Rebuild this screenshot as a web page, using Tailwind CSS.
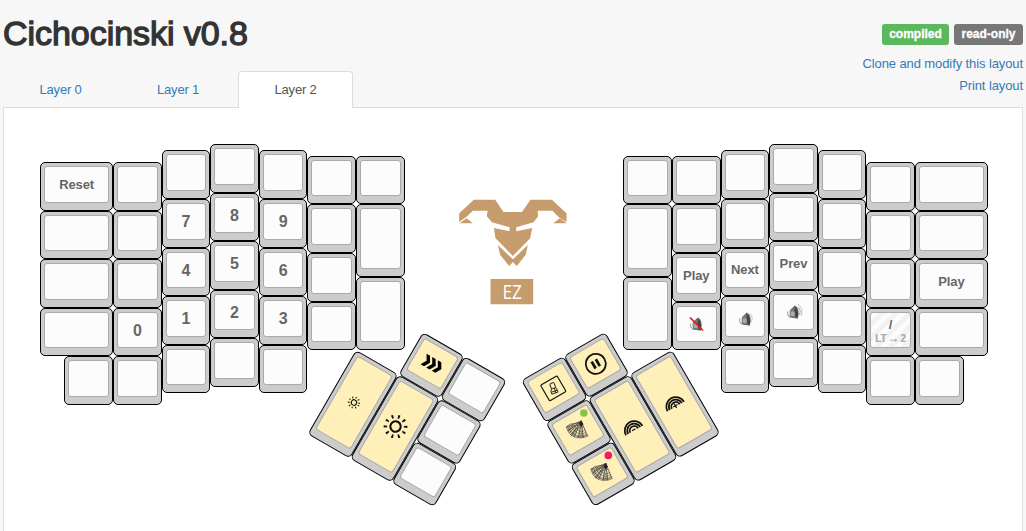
<!DOCTYPE html>
<html lang="en">
<head>
<meta charset="utf-8">
<title>Cichocinski v0.8</title>
<script src="https://cdn.jsdelivr.net/npm/@tailwindcss/browser@4"></script>
</head>
<body class="h-[531px] overflow-hidden bg-[#f7f7f7] font-['Liberation_Sans',Arial,sans-serif] text-[13px] text-[#333]">
<header class="flex h-[107px] justify-between pl-[3px] pr-[3px]">
  <div class="flex flex-col justify-between">
    <h1 class="mt-[13px] whitespace-nowrap text-[34px] leading-[40px] tracking-[-0.05px] text-[#333] [-webkit-text-stroke:1.3px_#333]">Cichocinski v0.8</h1>
    <nav class="relative z-10 -mb-px flex h-[37px] gap-[2px] tracking-[-0.2px] text-[#337ab7]">
      <a class="flex w-[115px] items-center justify-center">Layer 0</a>
      <a class="flex w-[116px] items-center justify-center">Layer 1</a>
      <a class="flex w-[115px] items-center justify-center rounded-t-[4px] border border-b-0 border-[#ddd] bg-white text-[#555]">Layer 2</a>
    </nav>
  </div>
  <div class="flex flex-col items-end pt-[24px] tracking-[-0.1px]">
    <div class="flex gap-[5px] text-[12px] font-bold tracking-normal text-white [-webkit-text-stroke:0.3px_#fff]">
      <span class="flex h-[21px] w-[67px] items-center justify-center rounded-[3px] bg-[#5cb85c] pb-[2px]">compiled</span>
      <span class="flex h-[21px] w-[69px] items-center justify-center rounded-[3px] bg-[#777] pb-[2px]">read-only</span>
    </div>
    <a class="mt-[8px] leading-[22px] text-[#337ab7]">Clone and modify this layout</a>
    <a class="leading-[22px] text-[#337ab7]">Print layout</a>
  </div>
</header>
<main class="relative ml-[3px] flex h-[424px] w-[1020px] border border-b-0 border-[#ddd] bg-white pl-[36.15px] pt-[36.1px]">
  <section id="left" class="flex h-[262px] w-[364.5px] items-start"></section>
  <svg class="mt-[46px] h-[120px] w-[218.75px]" viewBox="-45.2 0 218.75 120">
    <g transform="scale(.33333)" fill="#c69c6d">
      <path d="M27 70 71 29H135L160 66H215L241 29H305L349 70V97L326 82 307 62H262L264 79 250 97 198 112V124L246 114 240 145 188 198 136 145 131 114 178 124V112L125 97 110 79 112 62H68L49 80 27 96Z"/>
      <path d="M28 100 49 85 68 100ZM349 100 329 85 309 100ZM143 165 188 208 233 165 226 195 200 228 188 216 177 228 150 195Z"/>
      <path d="M121 267H249V343H121Z"/>
    </g>
    <text x="52.3" y="109" textLength="19.500" lengthAdjust="spacingAndGlyphs" fill="#fff" font-family="Open Sans, sans-serif" font-size="19.500">EZ</text>
  </svg>
  <section id="right" class="flex h-[262px] w-[364.5px] items-start"></section>
  <section id="thumbL" class="absolute left-[351.5px] top-[241.500px] flex h-[97.2px] w-[145.8px] origin-top-left rotate-30 items-start"></section>
  <section id="thumbR" class="absolute left-[521.6px] top-[241.500px] flex h-[97.2px] w-[145.8px] origin-top-right -rotate-30 items-start"></section>
</main>
<script>
// Key sizes, named width x height in key units
const size = {
  '1': 'w-[48.6px] h-[48.6px]',
  'wide': 'w-[72.9px] h-[48.6px]',
  'tall': 'w-[48.6px] h-[72.9px]',
  'double': 'w-[48.6px] h-[97.2px]'
};
const key = (s, content = '', face = 'bg-[#fcfcfc]') =>
  `<div class="${size[s]} shrink-0 flex rounded-[5px] border border-black bg-[#ccc] px-[3px] pt-[3px] pb-[7px]"><div class="relative flex grow flex-col items-center justify-center rounded-[3px] border border-[#aaa] ${face}">${content}</div></div>`;
const num = t => `<span class="pt-[1.2px] text-[16px] leading-[18px] font-bold text-[#666]">${t}</span>`;
const word = t => `<span class="pt-[0.6px] text-[13px] leading-[16px] font-bold tracking-[-0.1px] text-[#666]">${t}</span>`;
const col = (cls, ...keys) => `<div class="flex flex-col ${cls}">${keys.join('')}</div>`;
const k = key('1'), yellow = 'bg-[#fff0ba]';
const svg = (cls, body) => `<svg class="${cls} shrink-0 overflow-visible" viewBox="-12 -12 24 24" fill="none" stroke="#111">${body}</svg>`;

const speaker = (extra) => svg('size-[24px]',
  `<g stroke="none" transform="translate(.7 .5)"><path d="M-4-1 1-7C5-6 6 1 4 6L-4 5Z" fill="#777"/><path d="M1-6C4-4 5 1 4 6L1 3Z" fill="#444"/><ellipse cx="-1" cy="1.500" rx="2.2" ry="2.800" fill="#aaa"/><path d="M-6-1Q-7 3-3 5" fill="none" stroke="#aaa" stroke-width="1.2"/><path d="M-4-2 1-6M-3 4 3 5.500" stroke="#555" stroke-width=".8"/></g>` + extra);
const mute = speaker('<path d="M-6-6.500 7 6.500" stroke="#dc1e14" stroke-width="1.7"/>');
const volDown = speaker('<path d="M5.500-5Q8.500-1 6.500 3" stroke="#bbb" stroke-width=".8"/>');
const volUp = speaker('<path d="M5.500-5Q8.500-1 6.500 3" stroke="#999" stroke-width=".8"/><path d="M5-8Q11-3 8 4" stroke="#bbb" stroke-width=".9"/>');

const sun = cls => svg(cls, '<circle r="5" stroke-width="2"/><circle r="9.7" stroke-width="3.4" stroke-dasharray="1.8 4.2947"/>');
const chevrons = svg('size-[24px]', '<path d="M-10-6h4l3.500 6-3.500 6h-4l3.500-6zM-3.500-6h4l3.500 6-3.500 6h-4l3.500-6zM3-6h4l3.500 6-3.500 6h-4l3.500-6z" fill="#000" stroke="none"/>');
const pause = svg('size-[24px]', '<circle r="10" stroke-width="1.8"/><path d="M-2.400-4V4M2.400-4V4" stroke-width="2.800"/>');
const box = svg('size-[24px]', '<rect x="-9.500" y="-9" width="19" height="18" rx="1" stroke-width="1.200"/><g transform="rotate(12)"><rect x="-2" y="-5.500" width="4.500" height="5.500" rx="1" stroke-width=".9"/><path d="M-2 0-3.200 2.500V5H3.200V1L2 0M-3 3H3M1 0V5" stroke-width=".8"/></g>');
const rainbow = sign => svg('size-[24px]', `<path d="M-9.500 4A9.500 9.500 0 0 1 9.500 4M-7 4A7 7 0 0 1 7 4M-4.500 4A4.500 4.500 0 0 1 4.500 4" stroke-width="1.800"/><path d="${sign}" stroke-width="1.200"/>`);
const fan = dot => svg('size-[24px] rotate-30',
  `<path d="M4-9-11-3-9 2 4-9-7 5-3 7 4-9 1 8 6 8 4-9 10 7Z" fill="#444" fill-opacity=".3" stroke="none"/><path d="M4-9-11-3M4-9-9 1M4-9-8 3M4-9-6 6M4-9-3 7M4-9 1 8M4-9 6 8M4-9 10 6" stroke="#333" stroke-width=".7"/><path d="M-11-3Q-8 8 2 8 7 8 11 6M-10-4Q-7 6 2 7 7 7 10 5M-8-4Q-6 5 2 6 7 6 10 4M-6-5Q-3 3 3 4 7 4 9 2M-4-5Q0 1 4 2L8 0M-11-3-7-6 4-7M-9 1-5-4 5-5M-7 5-2-1 6-3" stroke="#444" stroke-width=".6"/><path d="M2-6 4-9 6-6 4-3Z" fill="#222" stroke="none"/><circle cx="6.500" cy="-17" r="3.800" fill="${dot}" stroke="none"/>`);

const stripes = 'bg-[repeating-linear-gradient(135deg,#fcfcfc_0px,#fcfcfc_5px,#f2f2f2_5px,#f2f2f2_10px)]';
const layerTap = '<span class="pt-px text-[13px] leading-[15px] font-bold text-[#666]">/</span><span class="flex items-center gap-px whitespace-nowrap text-[10px] leading-[13px] font-bold text-[#aaa] [-webkit-text-stroke:0.2px_#aaa]">LT<span class="font-[\'DejaVu_Sans\'] text-[12px]">→</span>2</span>';

document.getElementById('left').innerHTML =
  col('items-end mt-[17.9px]', key('wide', word('Reset')), key('wide'), key('wide'), key('wide'), k) +
  col('mt-[17.9px]', k, k, k, key('1', num(0)), k) +
  col('mt-[6.35px]', k, key('1', num(7)), key('1', num(4)), key('1', num(1)), k) +
  col('', k, key('1', num(8)), key('1', num(5)), key('1', num(2)), k) +
  col('mt-[6.35px]', k, key('1', num(9)), key('1', num(6)), key('1', num(3)), k) +
  col('mt-[11.7px]', k, k, k, k) +
  col('mt-[11.7px]', k, key('tall'), key('tall'));

document.getElementById('right').innerHTML =
  col('mt-[11.7px]', k, key('tall'), key('tall')) +
  col('mt-[11.7px]', k, k, key('1', word('Play')), key('1', mute)) +
  col('mt-[6.35px]', k, k, key('1', word('Next')), key('1', volDown), k) +
  col('', k, k, key('1', word('Prev')), key('1', volUp), k) +
  col('mt-[6.35px]', k, k, k, k, k) +
  col('mt-[17.9px]', k, k, k, key('1', layerTap, stripes), k) +
  col('items-start mt-[17.9px]', key('wide'), key('wide'), key('wide', word('Play')), key('wide'), k);

document.getElementById('thumbL').innerHTML =
  col('', key('double', sun('size-[13px]'), yellow)) +
  col('-mt-[48.6px]', key('1', chevrons, yellow), key('double', sun('size-[25px]'), yellow)) +
  col('-mt-[48.6px]', k, k, k);

document.getElementById('thumbR').innerHTML =
  col('-mt-[48.6px]', key('1', box, yellow), key('1', fan('#8bc34a'), yellow), key('1', fan('#e91e63'), yellow)) +
  col('-mt-[48.6px]', key('1', pause, yellow), key('double', rainbow('M-2 3H2'), yellow)) +
  col('', key('double', rainbow('M-2.500 3H2.500M0 .5V5.500'), yellow));
</script>
</body>
</html>
